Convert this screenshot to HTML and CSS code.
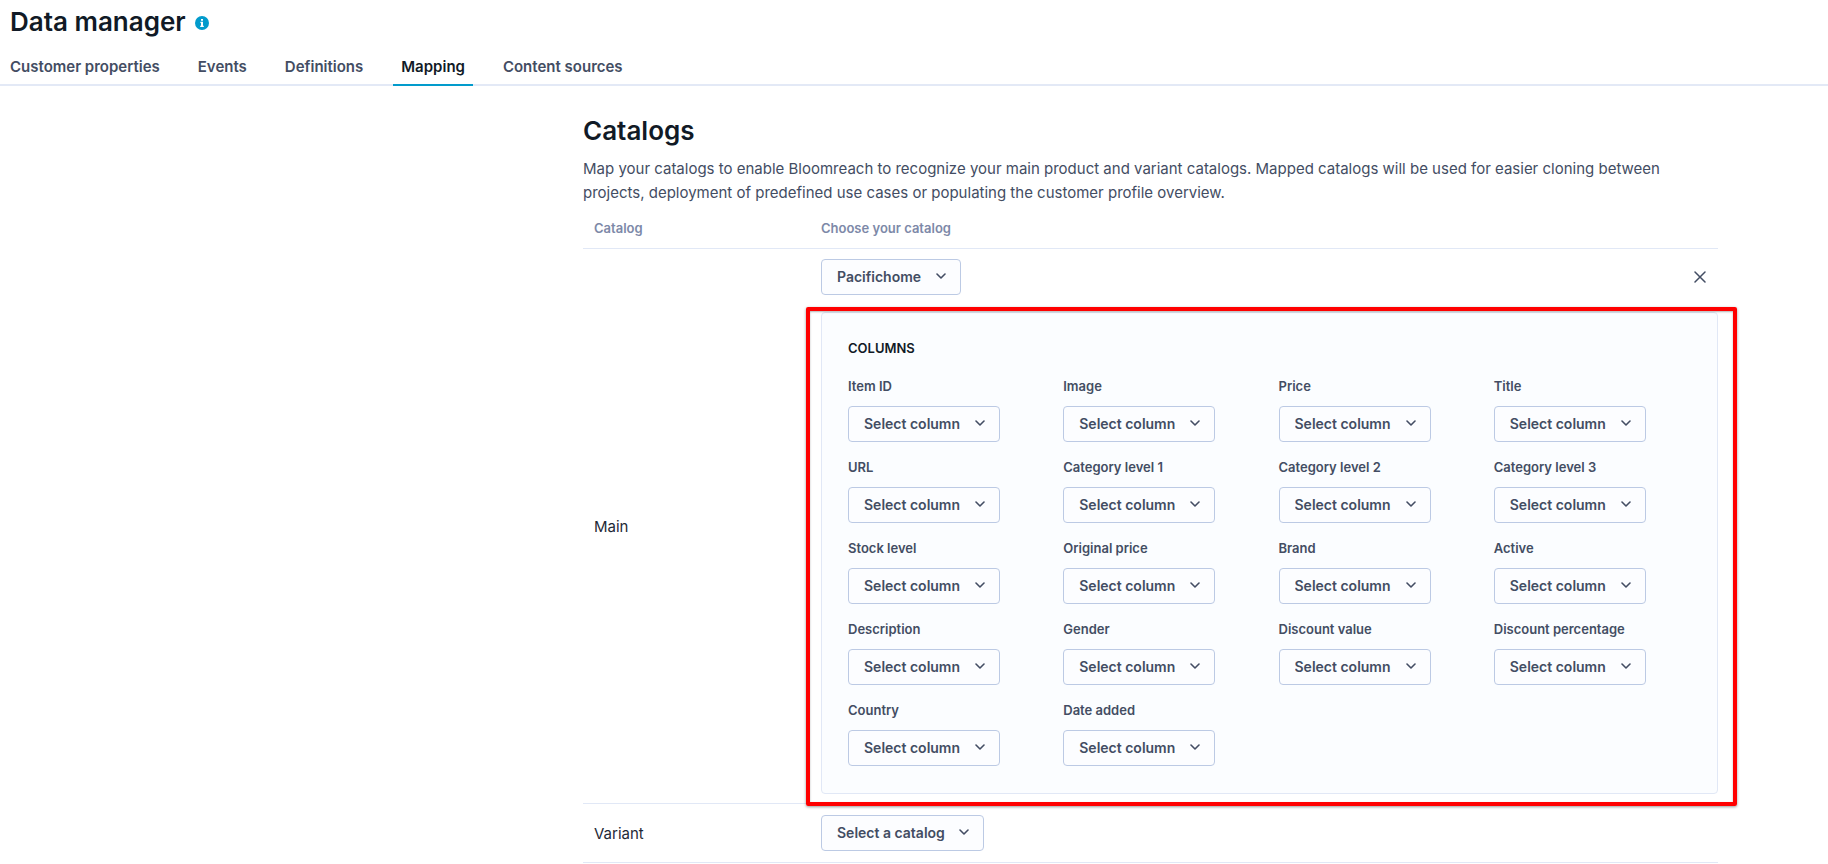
FILE: index.html
```html
<!DOCTYPE html>
<html lang="en">
<head>
  <meta charset="UTF-8">
  <title>Data manager</title>
  <meta name="viewport" content="width=device-width, initial-scale=1.0">
  <link rel="stylesheet" href="styles.css">
</head>
<body>

  <!-- Shared icons -->
  <svg class="sprite" aria-hidden="true">
    <symbol id="chevron" viewBox="0 0 10 6">
      <path d="M1 1l4 4 4-4" fill="none" stroke="currentColor" stroke-width="1.6" stroke-linecap="round" stroke-linejoin="round"/>
    </symbol>
  </svg>

  <header class="page-header">
    <div class="title-row">
      <h1>Data manager</h1>
      <svg class="info-icon" viewBox="0 0 14 14" role="img" aria-label="Info">
        <circle cx="7" cy="7" r="7"/>
        <path d="M6 3h2v1.7H6zM5.4 5.7H8v4h.8v1.2H5.2V9.7H6V6.9h-.6z"/>
      </svg>
    </div>
    <nav class="tabs">
      <a href="#properties">Customer properties</a>
      <a href="#events">Events</a>
      <a href="#definitions">Definitions</a>
      <a href="#mapping" class="active">Mapping</a>
      <a href="#sources">Content sources</a>
    </nav>
  </header>

  <main class="content">
    <h2>Catalogs</h2>
    <p class="intro">Map your catalogs to enable Bloomreach to recognize your main product and variant catalogs. Mapped catalogs will be used for easier cloning between projects, deployment of predefined use cases or populating the customer profile overview.</p>

    <table class="catalogs">
      <thead>
        <tr>
          <th class="name-col">Catalog</th>
          <th>Choose your catalog</th>
        </tr>
      </thead>
      <tbody>
        <tr class="main-row">
          <td class="name-col">Main</td>
          <td>
            <div class="catalog-row">
              <span class="select"><select aria-label="Main catalog"><option>Pacifichome</option></select><svg><use href="#chevron"/></svg></span>
              <button type="button" class="close" aria-label="Remove catalog">
                <svg viewBox="0 0 12 12"><path d="M1 1l10 10M11 1L1 11" fill="none" stroke="currentColor" stroke-width="1.5" stroke-linecap="round"/></svg>
              </button>
            </div>

            <section class="panel">
              <h3>COLUMNS</h3>
              <div class="fields">
                <div class="field">
                  <label for="item-id">Item ID</label>
                  <span class="select"><select id="item-id"><option>Select column</option></select><svg><use href="#chevron"/></svg></span>
                </div>
                <div class="field">
                  <label for="image">Image</label>
                  <span class="select"><select id="image"><option>Select column</option></select><svg><use href="#chevron"/></svg></span>
                </div>
                <div class="field">
                  <label for="price">Price</label>
                  <span class="select"><select id="price"><option>Select column</option></select><svg><use href="#chevron"/></svg></span>
                </div>
                <div class="field">
                  <label for="title">Title</label>
                  <span class="select"><select id="title"><option>Select column</option></select><svg><use href="#chevron"/></svg></span>
                </div>
                <div class="field">
                  <label for="url">URL</label>
                  <span class="select"><select id="url"><option>Select column</option></select><svg><use href="#chevron"/></svg></span>
                </div>
                <div class="field">
                  <label for="category-1">Category level 1</label>
                  <span class="select"><select id="category-1"><option>Select column</option></select><svg><use href="#chevron"/></svg></span>
                </div>
                <div class="field">
                  <label for="category-2">Category level 2</label>
                  <span class="select"><select id="category-2"><option>Select column</option></select><svg><use href="#chevron"/></svg></span>
                </div>
                <div class="field">
                  <label for="category-3">Category level 3</label>
                  <span class="select"><select id="category-3"><option>Select column</option></select><svg><use href="#chevron"/></svg></span>
                </div>
                <div class="field">
                  <label for="stock">Stock level</label>
                  <span class="select"><select id="stock"><option>Select column</option></select><svg><use href="#chevron"/></svg></span>
                </div>
                <div class="field">
                  <label for="original-price">Original price</label>
                  <span class="select"><select id="original-price"><option>Select column</option></select><svg><use href="#chevron"/></svg></span>
                </div>
                <div class="field">
                  <label for="brand">Brand</label>
                  <span class="select"><select id="brand"><option>Select column</option></select><svg><use href="#chevron"/></svg></span>
                </div>
                <div class="field">
                  <label for="active">Active</label>
                  <span class="select"><select id="active"><option>Select column</option></select><svg><use href="#chevron"/></svg></span>
                </div>
                <div class="field">
                  <label for="description">Description</label>
                  <span class="select"><select id="description"><option>Select column</option></select><svg><use href="#chevron"/></svg></span>
                </div>
                <div class="field">
                  <label for="gender">Gender</label>
                  <span class="select"><select id="gender"><option>Select column</option></select><svg><use href="#chevron"/></svg></span>
                </div>
                <div class="field">
                  <label for="discount-value">Discount value</label>
                  <span class="select"><select id="discount-value"><option>Select column</option></select><svg><use href="#chevron"/></svg></span>
                </div>
                <div class="field">
                  <label for="discount-percentage">Discount percentage</label>
                  <span class="select"><select id="discount-percentage"><option>Select column</option></select><svg><use href="#chevron"/></svg></span>
                </div>
                <div class="field">
                  <label for="country">Country</label>
                  <span class="select"><select id="country"><option>Select column</option></select><svg><use href="#chevron"/></svg></span>
                </div>
                <div class="field">
                  <label for="date-added">Date added</label>
                  <span class="select"><select id="date-added"><option>Select column</option></select><svg><use href="#chevron"/></svg></span>
                </div>
              </div>
              <div class="highlight"></div>
            </section>
          </td>
        </tr>
        <tr>
          <td class="name-col">Variant</td>
          <td>
            <span class="select"><select aria-label="Variant catalog"><option>Select a catalog</option></select><svg><use href="#chevron"/></svg></span>
          </td>
        </tr>
      </tbody>
    </table>
  </main>

</body>
</html>
```
FILE: styles.css
```css
* {
  box-sizing: border-box;
}

body {
  margin: 0;
  background: #fff;
  color: #434d63;
  font-family: Inter, sans-serif;
  font-size: 15px;
}

h1,
h2,
h3,
p {
  margin: 0;
}

h1,
h2 {
  color: #111a26;
  font-size: 26px;
  font-weight: 600;
  line-height: 32px;
}

.sprite {
  display: none;
}

/* Header */
.page-header {
  border-bottom: 2px solid #e3e9f6;
}

.title-row {
  display: flex;
  align-items: center;
  gap: 9px;
  padding: 6px 10px 0;
}

.info-icon {
  width: 14px;
  height: 14px;
  margin-top: 2px;
  fill: #fff;
}

.info-icon circle {
  fill: #029bcc;
}

.tabs {
  display: flex;
  gap: 22px;
  margin-top: 14px;
  padding-left: 2px;
}

.tabs a {
  margin-bottom: -2px;
  padding: 5px 8px 7px;
  border-bottom: 2px solid transparent;
  color: #434d63;
  font-weight: 600;
  line-height: 20px;
  text-decoration: none;
}

.tabs a.active {
  border-color: #029bcc;
  color: #111a26;
}

/* Content */
.content {
  padding: 29px 110px 0 583px;
}

.intro {
  margin-top: 10px;
  font-size: 15px;
  line-height: 24px;
}

.catalogs {
  width: 100%;
  border-collapse: collapse;
  table-layout: fixed;
}

.catalogs th {
  padding: 13px 0 10px;
  color: #7d89a8;
  font-size: 13px;
  font-weight: 600;
  line-height: 20px;
  text-align: left;
}

.catalogs tr {
  border-bottom: 1px solid #e1e8f6;
}

.catalogs td {
  padding: 11px 0;
}

.catalogs .main-row td {
  padding-top: 10px;
  padding-bottom: 9px;
}

.catalogs .name-col {
  width: 238px;
  padding-left: 11px;
}

.catalogs td.name-col {
  color: #1e2836;
}

.catalog-row {
  display: flex;
  justify-content: space-between;
  align-items: center;
  padding-right: 12px;
}

.close {
  display: flex;
  padding: 0;
  border: none;
  background: none;
  color: #434d63;
  cursor: pointer;
}

.close svg {
  width: 12px;
  height: 12px;
}

/* Select with its own chevron */
.select {
  display: flex;
  position: relative;
  width: fit-content;
}

.select select {
  height: 36px;
  padding: 0 38px 2px 15px;
  border: 1px solid #bccae4;
  border-radius: 4px;
  background: #fcfdff;
  color: #434d63;
  font-family: inherit;
  font-size: 14px;
  font-weight: 600;
  appearance: none;
  cursor: pointer;
}

.select svg {
  position: absolute;
  top: 14px;
  right: 15px;
  width: 10px;
  height: 6px;
  pointer-events: none;
}

/* Columns panel */
.panel {
  position: relative;
  margin-top: 17px;
  padding: 25px 8px 27px 26px;
  border: 1px solid #e1e8f6;
  border-radius: 4px;
  background: #fbfdff;
}

.panel h3 {
  color: #111a26;
  font-size: 13px;
  font-weight: 600;
  line-height: 20px;
}

.fields {
  display: grid;
  grid-template-columns: repeat(4, 1fr);
  gap: 15px 0;
  margin-top: 18px;
}

.field label {
  display: block;
  margin-bottom: 10px;
  font-size: 13px;
  font-weight: 600;
  line-height: 20px;
}

.highlight {
  position: absolute;
  inset: -6px -20px -13px -16px;
  border: 4px solid #f00;
  border-radius: 2px;
  box-shadow: 0 1px 3px rgba(0, 0, 0, 0.4), inset 0 1px 2px rgba(0, 0, 0, 0.3);
  pointer-events: none;
}
```
